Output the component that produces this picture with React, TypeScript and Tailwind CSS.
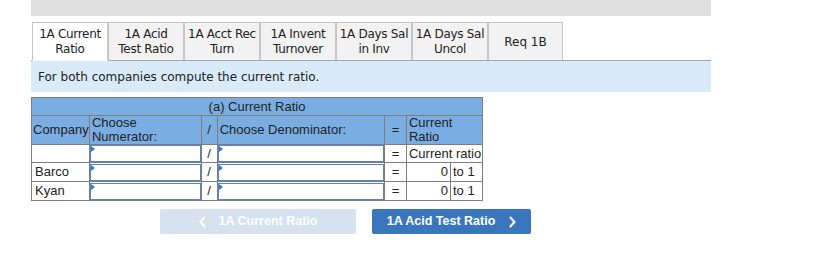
import React from "react";

const tabs: [string, string][] = [
  ["1A Current", "Ratio"],
  ["1A Acid", "Test Ratio"],
  ["1A Acct Rec", "Turn"],
  ["1A Invent", "Turnover"],
  ["1A Days Sal", "in Inv"],
  ["1A Days Sal", "Uncol"],
];

function Pick() {
  return (
    <div className="relative h-[17px] border border-[#5684c4] bg-white">
      <svg className="absolute left-0 top-0" width="5" height="6" viewBox="0 0 5 6">
        <path d="M0 0 L4 3 L0 6 Z" fill="#3b78c4" />
      </svg>
    </div>
  );
}

const cell = "border border-[#7d7d7d] p-0";

export default function App() {
  return (
    <div className="w-[815px] h-[267px] bg-white pl-[31px]" style={{ fontFamily: '"DejaVu Sans", Verdana, sans-serif' }}>
      <div className="w-[680px] h-[16px] bg-[#e0e0e0]" />
      <div className="mt-[6px] w-[680px] flex items-end border-b border-[#a8a8a8] pl-px">
        {tabs.map((t, i) => (
          <div
            key={i}
            className={`w-[76px] h-[38px] border border-[#c6c6c6] flex flex-col items-center justify-center text-[12px] leading-[15px] tracking-[-0.3px] text-[#222] overflow-hidden whitespace-nowrap ${
              i === 0 ? "bg-white border-b-white -mb-px h-[39px] border-[#b8b8b8]" : "bg-[#f2f2f2] border-b-0"
            }`}
          >
            <span>{t[0]}</span>
            <span>{t[1]}</span>
          </div>
        ))}
        <div className="w-[75px] h-[38px] border border-[#c6c6c6] border-b-0 bg-[#f2f2f2] flex items-center justify-center text-[12px] text-[#222]">
          Req 1B
        </div>
      </div>
      <div className="w-[680px] h-[31px] bg-[#d9ebf9] flex items-center pl-[7px] text-[12px] text-[#222]">
        For both companies compute the current ratio.
      </div>
      <table
        className="mt-[5px] border-collapse text-[13px] text-[#222] leading-[14px]"
        style={{ fontFamily: '"Liberation Sans", Arial, sans-serif', width: 452 }}
      >
        <colgroup>
          <col style={{ width: 58 }} />
          <col style={{ width: 112 }} />
          <col style={{ width: 16 }} />
          <col style={{ width: 168 }} />
          <col style={{ width: 22 }} />
          <col style={{ width: 44 }} />
          <col style={{ width: 32 }} />
        </colgroup>
        <tbody>
          <tr className="h-[18px] bg-[#7aaee3]">
            <td colSpan={7} className={`${cell} text-center`}>(a) Current Ratio</td>
          </tr>
          <tr className="h-[29px] bg-[#7aaee3]">
            <td className={`${cell} pl-[1px]`}>Company</td>
            <td className={`${cell} pl-[2px]`}>Choose<br />Numerator:</td>
            <td className={`${cell} text-center`}>/</td>
            <td className={`${cell} pl-[2px]`}>Choose Denominator:</td>
            <td className={`${cell} text-center`}>=</td>
            <td colSpan={2} className={`${cell} pl-[2px]`}>Current<br />Ratio</td>
          </tr>
          <tr className="h-[18px]">
            <td className={cell}></td>
            <td className={cell}><Pick /></td>
            <td className={`${cell} text-center`}>/</td>
            <td className={cell}><Pick /></td>
            <td className={`${cell} text-center`}>=</td>
            <td colSpan={2} className={`${cell} pl-[2px] whitespace-nowrap`}>Current ratio</td>
          </tr>
          {["Barco", "Kyan"].map((n) => (
            <tr key={n} className="h-[19px]">
              <td className={`${cell} pl-[3px]`}>{n}</td>
              <td className={cell}><Pick /></td>
              <td className={`${cell} text-center`}>/</td>
              <td className={cell}><Pick /></td>
              <td className={`${cell} text-center`}>=</td>
              <td className={`${cell} text-right pr-[2px]`}>0</td>
              <td className={`${cell} pl-[2px]`}>to 1</td>
            </tr>
          ))}
        </tbody>
      </table>
      <div className="mt-[8px] ml-[129px] flex gap-[16px] text-[12.5px] font-bold text-white" style={{ fontFamily: '"Liberation Sans", Arial, sans-serif' }}>
        <div className="w-[196px] h-[25px] rounded-[2px] bg-[#d6e2f0] flex items-center justify-center gap-[12px]">
          <svg width="8" height="12" viewBox="0 0 8 12"><path d="M6 1 L1.5 6 L6 11" stroke="white" strokeWidth="2" fill="none" /></svg>
          <span>1A Current Ratio</span>
        </div>
        <div className="w-[159px] h-[25px] rounded-[2px] bg-[#3a76bc] flex items-center justify-center gap-[13px]">
          <span>1A Acid Test Ratio</span>
          <svg width="8" height="12" viewBox="0 0 8 12"><path d="M2 1 L6.5 6 L2 11" stroke="white" strokeWidth="2" fill="none" /></svg>
        </div>
      </div>
    </div>
  );
}
